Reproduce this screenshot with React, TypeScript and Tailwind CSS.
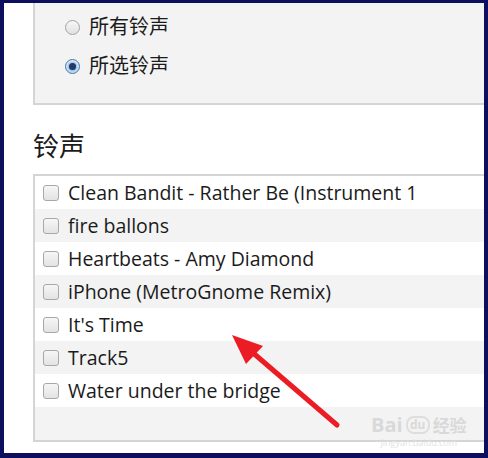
import React from 'react';

const songs = [
    'Clean Bandit - Rather Be (Instrument 1',
    'fire ballons',
    'Heartbeats - Amy Diamond',
    'iPhone (MetroGnome Remix)',
    "It's Time",
    'Track5',
    'Water under the bridge',
    '',
];

const font = { fontFamily: '"Open Sans", "Noto Sans CJK SC", sans-serif' };

function Radio({ checked }: { checked?: boolean }) {
    return (
        <span
            className={`w-[15px] h-[15px] rounded-full border flex items-center justify-center bg-gradient-to-b ${checked
                ? 'border-[#3d7bad] from-[#e6eef7] to-[#c9dbec]'
                : 'border-[#a3a3a3] from-[#f7f7f7] to-[#e1e1e1]'
                }`}
        >
            {checked && <span className="w-[7px] h-[7px] rounded-full bg-[#1d3c6b] shadow-[0_0_2px_1px_rgba(90,140,200,0.6)]" />}
        </span>
    );
}

function Checkbox() {
    return (
        <span className="w-[16px] h-[16px] shrink-0 rounded-[3px] border border-[#a8a8a8] bg-gradient-to-b from-[#f6f6f6] to-[#e3e3e3]" />
    );
}

export default function App() {
    return (
        <div className="w-[488px] h-[458px] bg-[#0b0f5e] pt-[3px] pl-[4px] pr-[4px] pb-[5px]" style={font}>
            <div className="relative w-full h-full bg-white overflow-hidden flex flex-col">
                {/* options panel, top is scrolled out of view */}
                <div className="ml-[29px] h-[102px] bg-[#f3f3f3] border-l-2 border-b-2 border-[#d5d5d5] pl-[30px] pt-[13px] flex flex-col gap-[17px] text-[20px] leading-[22px] text-[#1b1b1b]">
                    <label className="flex items-center gap-[9px]">
                        <Radio />
                        <span>所有铃声</span>
                    </label>
                    <label className="flex items-center gap-[9px]">
                        <Radio checked />
                        <span>所选铃声</span>
                    </label>
                </div>

                <div className="ml-[29px] mt-[24px] text-[26px] leading-[34px] text-[#1b1b1b]">铃声</div>

                <div className="ml-[29px] mt-[11px] border-l-2 border-t-2 border-b-2 border-[#d5d5d5] flex flex-col">
                    {songs.map((s, i) => (
                        <div
                            key={i}
                            className={`h-[33px] flex items-center gap-[9px] pl-[8px] text-[19.5px] text-[#1b1b1b] whitespace-nowrap ${i % 2 === 0 ? 'bg-white' : 'bg-[#f3f3f3]'}`}
                        >
                            {s && <Checkbox />}
                            {s && <span>{s}</span>}
                        </div>
                    ))}
                </div>

                {/* red annotation arrow */}
                <svg className="absolute left-0 top-0" width="480" height="450" viewBox="0 0 480 450">
                    <line x1="333" y1="422" x2="248" y2="349" stroke="#ec1c24" strokeWidth="5" strokeLinecap="round" />
                    <polygon points="228,332 259,343 242,361" fill="#ec1c24" />
                </svg>

                {/* watermark */}
                <div className="absolute left-[367px] top-[412px] flex flex-col items-center text-[#d9d9d9] leading-none">
                    <div className="flex items-center gap-[3px] text-[20px] font-bold">
                        <span>Bai</span>
                        <span className="w-[24px] h-[18px] rounded-[8px] border-2 border-[#dedede] text-[12px] flex items-center justify-center">du</span>
                        <span className="text-[17px]">经验</span>
                    </div>
                    <div className="text-[9px] mt-[3px] text-[#e2e2e2]">jingyan.baidu.com</div>
                </div>
            </div>
        </div>
    );
}
